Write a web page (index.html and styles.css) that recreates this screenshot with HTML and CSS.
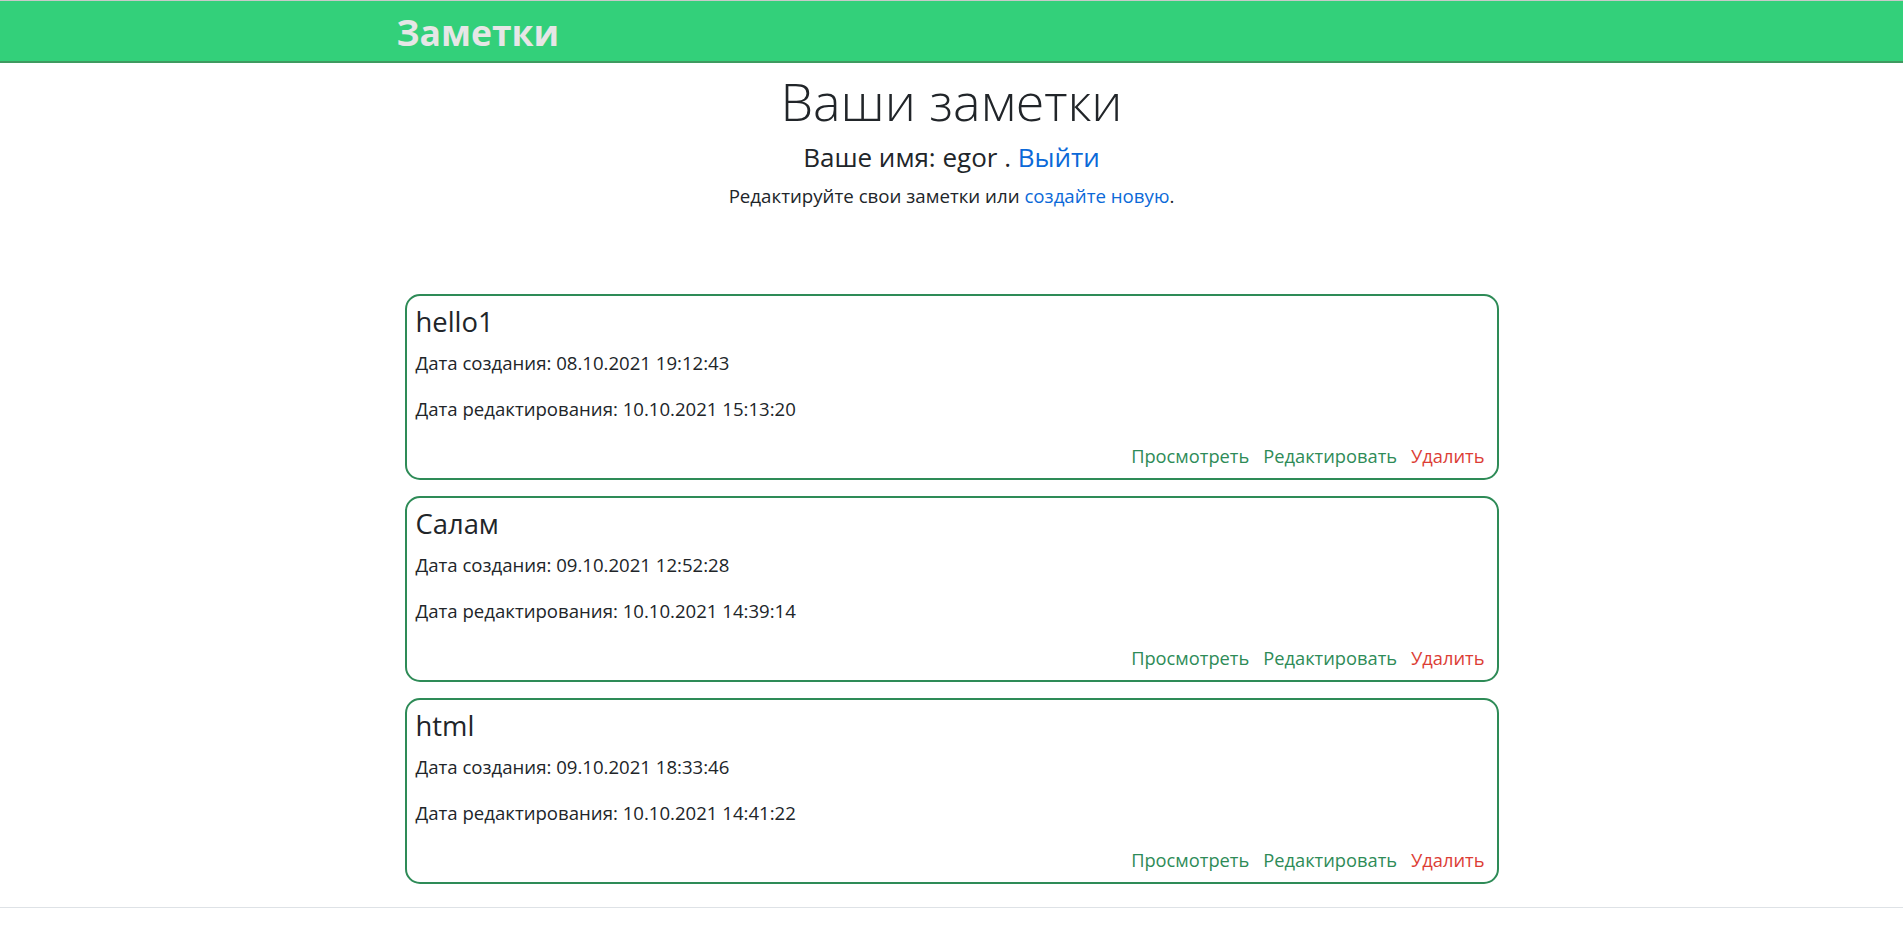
FILE: index.html
```html
<!DOCTYPE html>
<html lang="ru">
<head>
<meta charset="utf-8">
<title>Заметки</title>
<link rel="stylesheet" href="styles.css">
</head>
<body>
<header class="topbar">
  <div class="container">
    <a class="brand" href="#">Заметки</a>
  </div>
</header>
<main class="container">
  <section class="intro">
    <h1 class="page-title">Ваши заметки</h1>
    <h4 class="user-line">Ваше имя: egor . <a class="link-blue" href="#">Выйти</a></h4>
    <p class="hint">Редактируйте свои заметки или <a class="link-blue" href="#">создайте новую</a>.</p>
  </section>
  <ul class="notes">
    <li class="note">
      <h4 class="note-title">hello1</h4>
      <p class="note-date">Дата создания: 08.10.2021 19:12:43</p>
      <p class="note-date">Дата редактирования: 10.10.2021 15:13:20</p>
      <div class="note-actions">
        <a class="act act-green" href="#">Просмотреть</a>
        <a class="act act-green" href="#">Редактировать</a>
        <a class="act act-red" href="#">Удалить</a>
      </div>
    </li>
    <li class="note">
      <h4 class="note-title">Салам</h4>
      <p class="note-date">Дата создания: 09.10.2021 12:52:28</p>
      <p class="note-date">Дата редактирования: 10.10.2021 14:39:14</p>
      <div class="note-actions">
        <a class="act act-green" href="#">Просмотреть</a>
        <a class="act act-green" href="#">Редактировать</a>
        <a class="act act-red" href="#">Удалить</a>
      </div>
    </li>
    <li class="note">
      <h4 class="note-title">html</h4>
      <p class="note-date">Дата создания: 09.10.2021 18:33:46</p>
      <p class="note-date">Дата редактирования: 10.10.2021 14:41:22</p>
      <div class="note-actions">
        <a class="act act-green" href="#">Просмотреть</a>
        <a class="act act-green" href="#">Редактировать</a>
        <a class="act act-red" href="#">Удалить</a>
      </div>
    </li>
  </ul>
</main>
<footer class="footer"></footer>
</body>
</html>
```

FILE: styles.css
```css
* { box-sizing: border-box; }
html, body { margin: 0; padding: 0; }
body {
  font-family: "Open Sans", "Noto Sans", sans-serif;
  color: #212529;
  background: #fff;
  border-top: 1px solid #c9c9c9;
}
a { text-decoration: none; }
.container {
  width: 1110px;
  margin: 0 auto;
}
.topbar {
  background: #33d07a;
  border-bottom: 2px solid #3f9a60;
  height: 62px;
  padding-top: 3px;
}
.brand {
  display: block;
  color: #e6e6e6;
  font-weight: 700;
  font-size: 35.5px;
  line-height: 57px;
}
.intro { text-align: center; }
.page-title {
  margin: 7px 0 0;
  font-weight: 300;
  font-size: 52px;
  line-height: 62px;
}
.user-line {
  margin: 10px 0 0;
  font-weight: 400;
  font-size: 26px;
  line-height: 30px;
}
.hint {
  margin: 10px 0 0;
  font-size: 18.7px;
  line-height: 28px;
}
.link-blue { color: #0b69d8; }
.notes {
  list-style: none;
  margin: 84px 0 0;
  padding: 0 8px 7px;
}
.note {
  border: 2px solid #2e8b57;
  border-radius: 15px;
  padding: 9px 12px 8px 9px;
  margin-bottom: 16px;
}
.note-title {
  margin: 0 0 10px;
  font-weight: 400;
  font-size: 27.4px;
  line-height: 34px;
}
.note-date {
  margin: 0 0 18px;
  font-size: 18.6px;
  line-height: 28px;
}
.note-actions {
  display: flex;
  justify-content: flex-end;
  gap: 14px;
  margin-top: 19px;
  font-size: 18.3px;
  line-height: 28px;
}
.act-green { color: #2e8b57; }
.act-red { color: #dc3d35; }
.footer {
  border-top: 1px solid #dee2e6;
  height: 20px;
}
```
